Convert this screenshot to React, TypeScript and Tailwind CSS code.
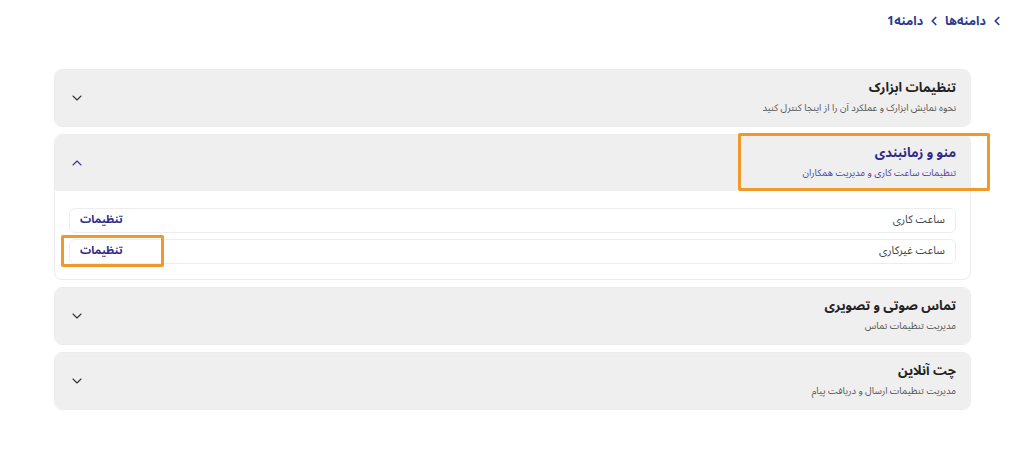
import React from 'react';
import { ChevronDown, ChevronUp, ChevronLeft } from 'lucide-react';

const font = { fontFamily: '"Noto Sans Arabic", "DejaVu Sans", "Noto Sans", sans-serif' };

const Section = ({
  title,
  subtitle,
  open,
  children
}: {
  title: string;
  subtitle: string;
  open?: boolean;
  children?: React.ReactNode;
}) => (
  <div className="rounded-lg border border-[#ececec] overflow-hidden bg-white">
    <div className="h-[56px] bg-[#efefef] flex items-center justify-between px-[14px]">
      <div className="flex flex-col items-start gap-[6px]">
        <span className={`text-[13px] font-bold leading-[15px] ${open ? 'text-[#2e2a8a]' : 'text-[#222]'}`}>{title}</span>
        <span className={`text-[9.5px] leading-[12px] ${open ? 'text-[#4b46a0]' : 'text-[#555]'}`}>{subtitle}</span>
      </div>
      {open ? (
        <ChevronUp className="w-4 h-4 text-[#3b3790]" strokeWidth={1.6} />
      ) : (
        <ChevronDown className="w-4 h-4 text-[#333]" strokeWidth={1.6} />
      )}
    </div>
    {children}
  </div>
);

const Row = ({ label }: { label: string }) => (
  <div className="h-[25px] border border-[#ededed] rounded-md flex items-center justify-between px-[10px]">
    <span className="text-[11px] text-[#444]">{label}</span>
    <span className="text-[11px] font-bold text-[#2e2a8a]">تنظیمات</span>
  </div>
);

export default function App() {
  return (
    <div dir="rtl" style={font} className="relative w-[1024px] h-[451px] bg-white">
      <div className="flex items-center gap-[4px] pt-[12px] pr-[20px] text-[12.5px] font-bold text-[#2b3a8f]">
        <ChevronLeft className="w-[14px] h-[14px]" strokeWidth={3} />
        <span>دامنه‌ها</span>
        <ChevronLeft className="w-[14px] h-[14px]" strokeWidth={3} />
        <span>دامنه1</span>
      </div>

      <div className="mt-[38px] mr-[53px] ml-[54px] flex flex-col gap-[7px]">
        <Section title="تنظیمات ابزارک" subtitle="نحوه نمایش ابزارک و عملکرد آن را از اینجا کنترل کنید" />
        <Section title="منو و زمانبندی" subtitle="تنظیمات ساعت کاری و مدیریت همکاران" open>
          <div className="px-[14px] pt-[17px] pb-[15px] flex flex-col gap-[6px]">
            <Row label="ساعت کاری" />
            <Row label="ساعت غیرکاری" />
          </div>
        </Section>
        <Section title="تماس صوتی و تصویری" subtitle="مدیریت تنظیمات تماس" />
        <Section title="چت آنلاین" subtitle="مدیریت تنظیمات ارسال و دریافت پیام" />
      </div>

      <div className="absolute left-[738px] top-[133px] w-[252px] h-[58px] border-[3px] border-[#f0982a] rounded-[2px] pointer-events-none" />
      <div className="absolute left-[61px] top-[235px] w-[103px] h-[32px] border-[3px] border-[#f0982a] rounded-[2px] pointer-events-none" />
    </div>
  );
}
